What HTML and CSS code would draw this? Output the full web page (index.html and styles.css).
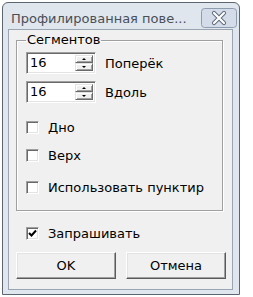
FILE: index.html
```html
<!DOCTYPE html>
<html lang="ru">
<head>
    <meta charset="UTF-8">
    <title>Профилированная поверхность</title>
    <link rel="stylesheet" href="styles.css">
</head>
<body>
    <div class="window">
        <div class="titlebar">
            <span class="title">Профилированная пове...</span>
            <span class="close-btn">
                <svg width="36" height="20" viewBox="0 0 36 20">
                    <rect x="0.5" y="0.5" width="35" height="19" rx="3" fill="#d3dce8" stroke="#8e9cb0"/>
                    <path d="M13 5 L23 15 M23 5 L13 15" stroke="#5f6b7c" stroke-width="4.2" stroke-linecap="round"/>
                    <path d="M13 5 L23 15 M23 5 L13 15" stroke="#ffffff" stroke-width="2.2" stroke-linecap="round"/>
                </svg>
            </span>
        </div>
        <div class="client">
            <fieldset class="group">
                <legend>Сегментов</legend>
                <div class="spin-row first">
                    <div class="spin">
                        <span class="spin-value">16</span>
                        <span class="spin-btns">
                            <span class="spin-btn"><i class="arrow-up"></i></span>
                            <span class="spin-btn"><i class="arrow-down"></i></span>
                        </span>
                    </div>
                    <span class="label">Поперёк</span>
                </div>
                <div class="spin-row second">
                    <div class="spin">
                        <span class="spin-value">16</span>
                        <span class="spin-btns">
                            <span class="spin-btn"><i class="arrow-up"></i></span>
                            <span class="spin-btn"><i class="arrow-down"></i></span>
                        </span>
                    </div>
                    <span class="label">Вдоль</span>
                </div>
                <div class="check check-bottom"><span class="box"></span>Дно</div>
                <div class="check check-top"><span class="box"></span>Верх</div>
                <div class="check check-dash"><span class="box"></span>Использовать пунктир</div>
            </fieldset>
            <div class="check check-ask">
                <span class="box">
                    <svg width="11" height="11" viewBox="0 0 11 11">
                        <path d="M2 5 L4.5 7.5 L9 2.5" fill="none" stroke="#000" stroke-width="2"/>
                    </svg>
                </span>Запрашивать
            </div>
            <div class="buttons">
                <button class="btn">OK</button>
                <button class="btn">Отмена</button>
            </div>
        </div>
    </div>
</body>
</html>
```

FILE: styles.css
```css
*{
    box-sizing: border-box;
    font-family: "DejaVu Sans", sans-serif;
}
body{
    margin: 0;
    background-color: #ffffff;
}
.window{
    width: 238px;
    height: 293px;
    margin: 2px 0 0 2px;
    border: 1px solid #5d6670;
    border-radius: 6px 6px 0 0;
    background-color: #dfe6ee;
    display: flex;
    flex-direction: column;
}
.titlebar{
    height: 26px;
    display: flex;
    align-items: flex-start;
    justify-content: space-between;
    padding: 0 2px 0 8px;
}
.title{
    font-size: 13px;
    line-height: 16px;
    margin-top: 8px;
    color: #4a4f57;
}
.close-btn{
    margin-top: 5px;
    height: 20px;
}
.client{
    flex: 1;
    margin: 0 6px 4px 5px;
    border: 1px solid #9aa5b3;
    background-color: #f0f0f0;
    padding: 1px 0 0 7px;
    font-size: 13px;
    color: #000;
}
.group{
    width: 207px;
    margin: 0;
    padding: 0 9px 16px 9px;
    border: 1px solid #a0a0a0;
    box-shadow: inset 1px 1px #ffffff, 1px 1px #ffffff;
}
.group legend{
    padding: 0 1px;
    font-size: 13px;
    line-height: 18px;
}
.spin-row{
    display: flex;
    align-items: center;
    height: 22px;
}
.spin-row.first{
    margin-top: 3px;
}
.spin-row.second{
    margin-top: 7px;
}
.spin{
    width: 70px;
    height: 22px;
    display: flex;
    background-color: #fff;
    border: 1px solid;
    border-color: #a0a0a0 #ffffff #ffffff #a0a0a0;
    box-shadow: inset 1px 1px #696969, inset -1px -1px #e3e3e3;
    padding: 2px;
}
.spin-value{
    flex: 1;
    line-height: 16px;
    padding-left: 1px;
}
.spin-btns{
    width: 18px;
    display: flex;
    flex-direction: column;
}
.spin-btn{
    flex: 1;
    display: flex;
    align-items: center;
    justify-content: center;
    background-color: #f0f0f0;
    border: 1px solid;
    border-color: #e3e3e3 #696969 #696969 #e3e3e3;
    box-shadow: inset 1px 1px #fff, inset -1px -1px #a0a0a0;
}
.arrow-up,
.arrow-down{
    width: 0;
    height: 0;
    border-left: 2px solid transparent;
    border-right: 2px solid transparent;
}
.arrow-up{
    border-bottom: 2px solid #000;
}
.arrow-down{
    border-top: 2px solid #000;
}
.label{
    margin-left: 9px;
}
.check{
    display: flex;
    align-items: center;
    height: 13px;
    white-space: nowrap;
}
.box{
    width: 13px;
    height: 13px;
    margin-right: 9px;
    background-color: #fff;
    border: 1px solid;
    border-color: #a0a0a0 #ffffff #ffffff #a0a0a0;
    box-shadow: inset 1px 1px #696969, inset -1px -1px #e3e3e3;
    display: flex;
    align-items: center;
    justify-content: center;
}
.check-bottom{
    margin-top: 18px;
}
.check-top{
    margin-top: 15px;
}
.check-dash{
    margin-top: 19px;
}
.check-ask{
    margin: 16px 0 0 10px;
}
.buttons{
    margin-top: 12px;
    display: flex;
    gap: 10px;
}
.btn{
    width: 100px;
    height: 27px;
    font-size: 13px;
    background-color: #f0f0f0;
    border: 1px solid;
    border-color: #ffffff #5a5a5a #5a5a5a #ffffff;
    box-shadow: inset -1px -1px #a0a0a0, inset 1px 1px #e3e3e3;
    padding: 0;
    color: #000;
}
```
